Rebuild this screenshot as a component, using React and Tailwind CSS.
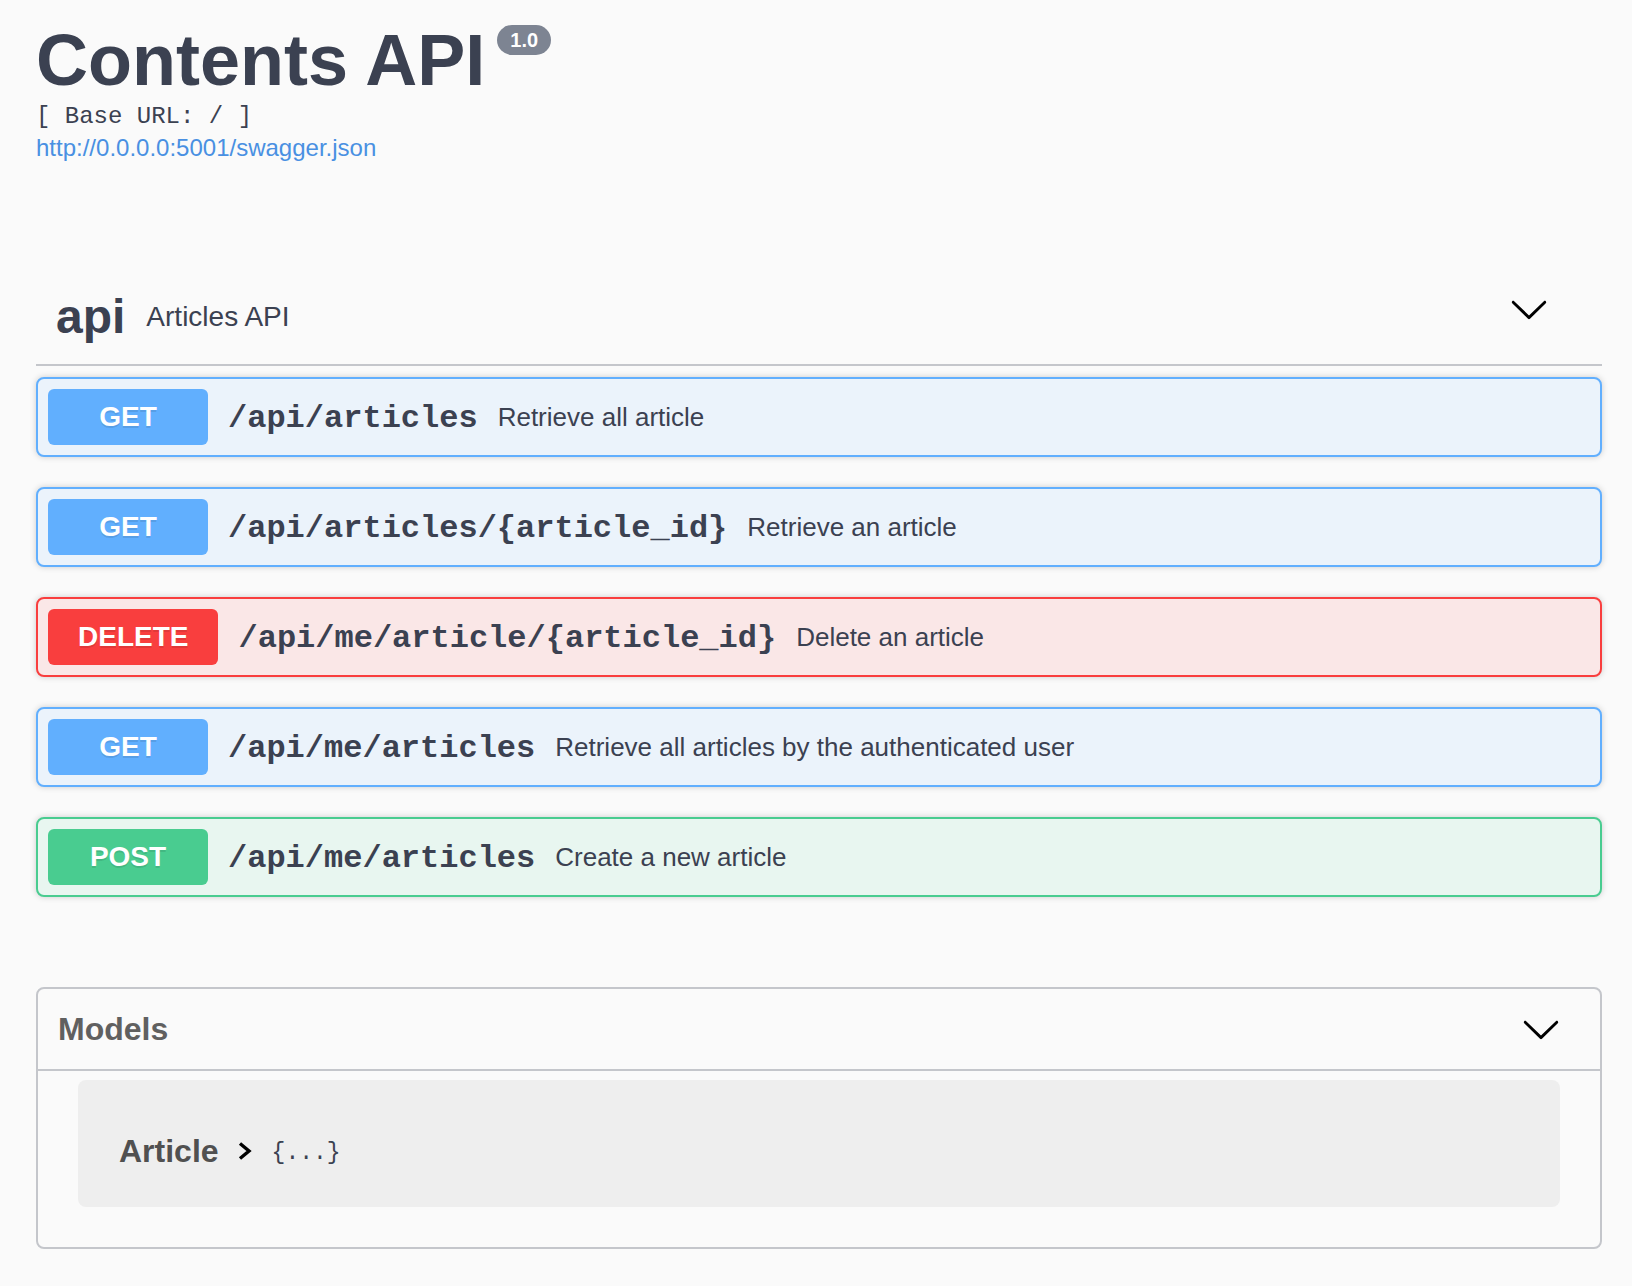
import React from "react";

const sans = "font-['Liberation_Sans',Arial,sans-serif]";
const mono = "font-['Liberation_Mono','Courier_New',monospace]";

const operations = [
  { method: "GET", path: "/api/articles", desc: "Retrieve all article" },
  { method: "GET", path: "/api/articles/{article_id}", desc: "Retrieve an article" },
  { method: "DELETE", path: "/api/me/article/{article_id}", desc: "Delete an article" },
  { method: "GET", path: "/api/me/articles", desc: "Retrieve all articles by the authenticated user" },
  { method: "POST", path: "/api/me/articles", desc: "Create a new article" },
];

const methodStyles = {
  GET: { block: "border-[#61affe] bg-[#ebf3fb]", badge: "bg-[#61affe]" },
  DELETE: { block: "border-[#f93e3e] bg-[#fae7e7]", badge: "bg-[#f93e3e]" },
  POST: { block: "border-[#49cc90] bg-[#e8f6f0]", badge: "bg-[#49cc90]" },
};

const ChevronDown = ({ className = "" }) => (
  <svg className={className} width="40" height="40" viewBox="0 0 20 20">
    <path
      d="M17.418 6.109c.272-.268.709-.268.979 0s.271.701 0 .969l-7.908 7.83c-.27.268-.707.268-.979 0l-7.908-7.83c-.27-.268-.27-.701 0-.969.271-.268.709-.268.979 0L10 13.25l7.418-7.141z"
      fill="#000"
    />
  </svg>
);

const Operation = ({ method, path, desc }) => {
  const s = methodStyles[method];
  return (
    <div
      className={`flex items-center h-[80px] px-[10px] border-2 rounded-lg shadow-[0_0_6px_rgba(0,0,0,0.19)] ${s.block}`}
    >
      <span
        className={`flex items-center justify-center min-w-[160px] h-[56px] px-[30px] rounded-[6px] text-white text-[28px] font-bold [text-shadow:0_2px_0_rgba(0,0,0,0.1)] ${s.badge}`}
      >
        {method}
      </span>
      <span className={`${mono} font-bold text-[32px] px-[20px] pt-[4px] text-[#3b4151]`}>{path}</span>
      <span className="text-[26px] text-[#3b4151]">{desc}</span>
    </div>
  );
};

export default function App() {
  return (
    <div className={`${sans} bg-[#fafafa] min-h-screen pl-[36px] pr-[30px] pt-[24px] text-[#3b4151]`}>
      {/* info */}
      <div className="flex items-start">
        <h2 className="text-[72px] leading-[72px] font-bold">Contents API</h2>
        <span className="ml-[12px] mt-[1px] h-[30px] px-[13px] flex items-center rounded-full bg-[#7d8492] text-white text-[20px] font-bold">
          1.0
        </span>
      </div>
      <pre className={`${mono} text-[24px] leading-[28px] mt-[7px]`}>[ Base URL: / ]</pre>
      <a className="block text-[24px] leading-[28px] mt-[3px] text-[#4990e2]">
        http://0.0.0.0:5001/swagger.json
      </a>

      {/* tag */}
      <div className="mt-[107px] flex items-center h-[97px] pl-[20px] pr-[53px] border-b-2 border-[#c4c6cb]">
        <span className="text-[48px] font-bold">api</span>
        <span className="ml-[21px] text-[28px] flex-1">Articles API</span>
        <ChevronDown className="mb-[16px]" />
      </div>

      <div className="mt-[11px] flex flex-col gap-[30px]">
        {operations.map((op, i) => (
          <Operation key={i} {...op} />
        ))}
      </div>

      {/* models */}
      <section className="mt-[90px] border-2 border-[#c4c6cb] rounded-lg">
        <div className="flex items-center h-[82px] pl-[20px] pr-[39px] border-b-2 border-[#c4c6cb]">
          <h4 className="flex-1 text-[32px] font-bold text-[#606060]">Models</h4>
          <ChevronDown />
        </div>
        <div className="mx-[40px] mt-[9px] mb-[40px] h-[127px] rounded-lg bg-[#eeeeee] flex items-center pl-[41px] pt-[14px]">
          <span className="text-[32px] font-bold text-[#505050]">Article</span>
          <svg className="ml-[19px]" width="14" height="18" viewBox="0 0 14 18">
            <path d="M2 1.5 L11 9 L2 16.5" fill="none" stroke="#000" strokeWidth="3.4" />
          </svg>
          <span className={`${mono} ml-[20px] pt-[5px] text-[23px] text-[#3b4151]`}>{"{...}"}</span>
        </div>
      </section>
    </div>
  );
}
